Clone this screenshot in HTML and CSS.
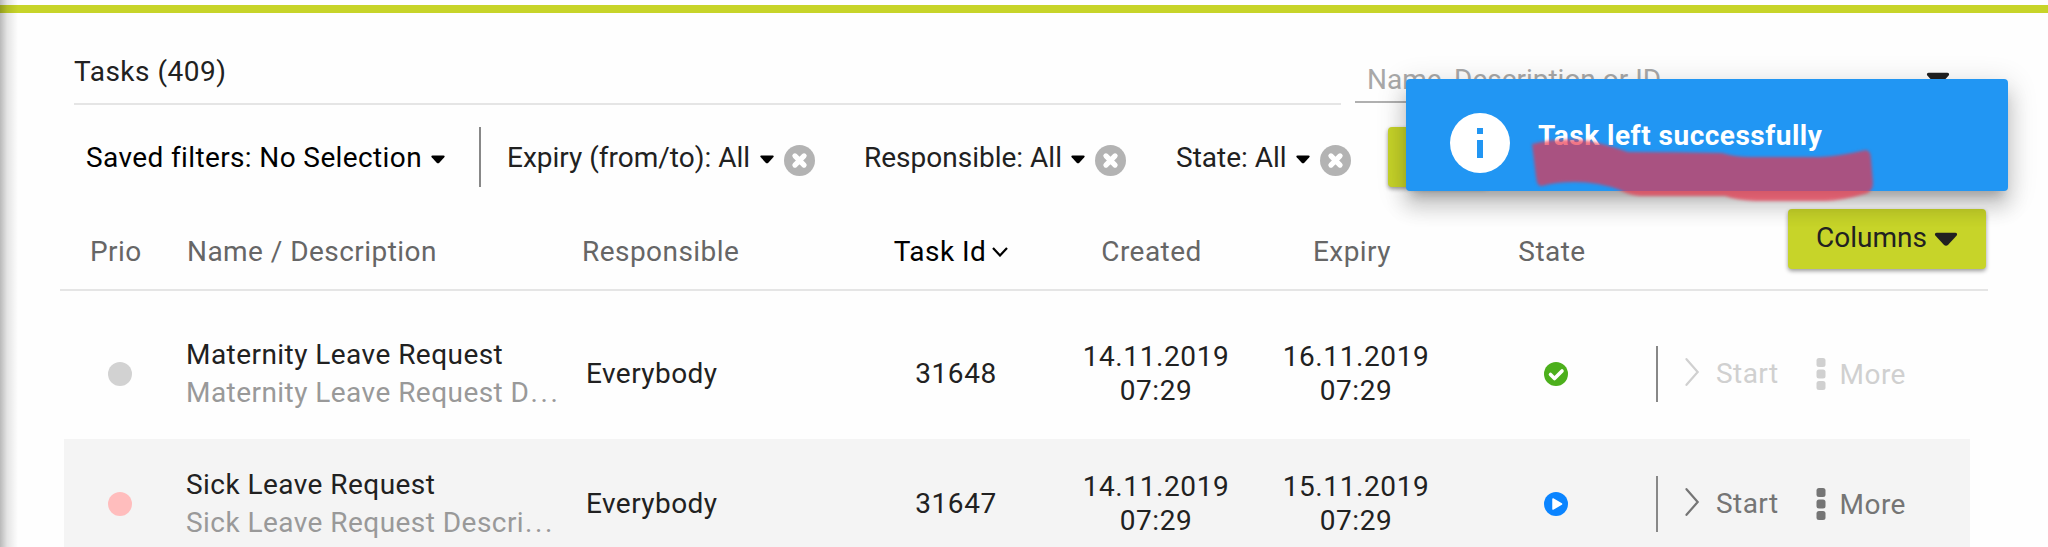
FILE: index.html
```html
<!DOCTYPE html>
<html lang="en">
<head>
<meta charset="utf-8">
<title>Tasks</title>
<link rel="stylesheet" href="styles.css">
</head>
<body>
<svg class="defs" width="0" height="0">
  <defs>
    <symbol id="caret" viewBox="0 0 14 9"><path d="M1.5 0.5h11c1.2 0 1.5 1 .8 1.800L8.300 7.700c-.8.8-1.800.8-2.600 0L.7 2.300C0 1.500.3.500 1.500.500z"/></symbol>
    <symbol id="clear" viewBox="0 0 32 32"><circle cx="16" cy="16" r="16" fill="#b3b3b3"/><path d="M11.300 11.300l9.400 9.400M20.700 11.300l-9.400 9.400" stroke="#fff" stroke-width="5.400" stroke-linecap="round"/></symbol>
    <symbol id="chevron" viewBox="0 0 16 28"><path d="M2.500 1.200L13.700 14 2.500 26.800" fill="none" stroke="currentColor" stroke-width="2.200" stroke-linecap="round"/></symbol>
    <symbol id="dots" viewBox="0 0 10 32"><rect x=".5" y="0" width="9" height="9" rx="2.500"/><rect x=".5" y="11.500" width="9" height="9" rx="2.500"/><rect x=".5" y="23" width="9" height="9" rx="2.500"/></symbol>
  </defs>
</svg>
<div class="page">
  <div class="accent"></div>
  <header class="top">
    <h1 class="title">Tasks (409)</h1>
    <div class="search"><span>Name, Description or ID</span><svg class="search-caret"><use href="#caret"/></svg></div>
  </header>
  <div class="filters">
    <div class="saved">Saved filters: No Selection<svg class="caret"><use href="#caret"/></svg></div>
    <div class="filter expiry">Expiry (from/to): All<svg class="caret"><use href="#caret"/></svg><svg class="clear"><use href="#clear"/></svg></div>
    <div class="filter resp">Responsible: All<svg class="caret"><use href="#caret"/></svg><svg class="clear"><use href="#clear"/></svg></div>
    <div class="filter state">State: All<svg class="caret"><use href="#caret"/></svg><svg class="clear"><use href="#clear"/></svg></div>
    <div class="add"></div>
  </div>
  <div class="head grid">
    <span>Prio</span><span>Name / Description</span><span>Responsible</span>
    <span class="c sorted">Task Id<svg class="sort" viewBox="0 0 16 10"><path d="M1 1l7 7.500L15 1" fill="none" stroke="#000" stroke-width="2.200"/></svg></span>
    <span class="c">Created</span><span class="c">Expiry</span><span class="c">State</span>
    <div class="columns">Columns<svg><use href="#caret"/></svg></div>
  </div>
  <div class="row grid">
    <i class="prio"></i>
    <div class="name"><div>Maternity Leave Request</div><div class="desc">Maternity Leave Request D<span class="ellipsis">...</span></div></div>
    <span class="who">Everybody</span><span class="c num">31648</span>
    <span class="c num">14.11.2019<br>07:29</span><span class="c num">16.11.2019<br>07:29</span>
    <svg class="status" viewBox="0 0 24 24"><circle cx="12" cy="12" r="12" fill="#4caf1c"/><path d="M6.500 12.500l4 4 7.500-7.500" fill="none" stroke="#fff" stroke-width="3.600" stroke-linecap="round" stroke-linejoin="round"/></svg>
    <div class="actions off"><svg class="chev"><use href="#chevron"/></svg><span class="start">Start</span><svg class="dots"><use href="#dots"/></svg><span class="more">More</span></div>
  </div>
  <div class="row grid alt">
    <i class="prio high"></i>
    <div class="name"><div>Sick Leave Request</div><div class="desc">Sick Leave Request Descri<span class="ellipsis">...</span></div></div>
    <span class="who">Everybody</span><span class="c num">31647</span>
    <span class="c num">14.11.2019<br>07:29</span><span class="c num">15.11.2019<br>07:29</span>
    <svg class="status" viewBox="0 0 24 24"><circle cx="12" cy="12" r="12" fill="#0a84ff"/><path d="M9 7l8.500 5L9 17z" fill="#fff" stroke="#fff" stroke-width="1.500" stroke-linejoin="round"/></svg>
    <div class="actions"><svg class="chev"><use href="#chevron"/></svg><span class="start">Start</span><svg class="dots"><use href="#dots"/></svg><span class="more">More</span></div>
  </div>
</div>
<div class="edge"></div>
<div class="toast">
  <svg class="info" viewBox="0 0 60 60"><circle cx="30" cy="30" r="30" fill="#fff"/><path d="M27 15h6v6h-6zM27 27h6v18h-6z" fill="#2196f3"/></svg>
  <span>Task left successfully</span>
</div>
<svg class="marker" viewBox="0 0 350 70"><path d="M2 9Q30 2 60 6Q85 12 98 17Q145 17 192 18Q205 22 220 22H290Q310 21 336 15Q341 16 341 24L343 48Q343 57 335 59Q310 66 295 66H225Q205 65 195 61H110Q98 60 90 55Q68 47 45 47Q25 47 12 51Q7 52 6 42Z"/></svg>
</body>
</html>
```
FILE: styles.css
```css
* { box-sizing: border-box; }
body { margin: 0; width: 2048px; height: 547px; overflow: hidden; position: relative; background: #fefefe; font: 28px/34px Roboto, sans-serif; letter-spacing: .45px; color: #212121; }
.defs { position: absolute; }
svg { flex: none; display: block; }
.page { padding-top: 5px; }
.accent { height: 8px; background: #c7d429; }
.top { display: flex; height: 92px; padding-left: 74px; gap: 14px; }
.title { width: 1267px; margin: 0; padding-top: 42px; font-size: 28px; font-weight: 400; line-height: 34px; letter-spacing: .5px; border-bottom: 2px solid #e5e5e5; }
.search { display: flex; justify-content: space-between; width: 632px; height: 90px; padding: 50px 37px 0 12px; border-bottom: 2px solid #b0b0b0; color: #a8a8a8; letter-spacing: 0; }
.search-caret { width: 24px; height: 15px; margin-top: 9px; fill: #212121; }
.filters { display: flex; height: 100px; padding-left: 86px; letter-spacing: 0; }
.filters > div { display: flex; padding-top: 36px; }
.filters .saved { width: 395px; height: 60px; margin-top: 22px; padding-top: 14px; border-right: 2px solid #888; color: #000; letter-spacing: .38px; }
.caret { width: 14px; height: 9px; margin: 14px 0 0 9.5px; fill: #000; }
.clear { width: 31px; height: 31px; margin: 4px 0 0 10px; }
.expiry { margin-left: 26px; width: 357px; }
.resp { width: 312px; }
.state { width: 212px; }
.filters .add { width: 100px; height: 60px; margin-top: 22px; background: #c7d429; border-radius: 4px; box-shadow: 0 2px 4px rgba(0,0,0,.4); }
.grid { display: grid; grid-template-columns: 96px 400px 270px 200px 200px 200px 200px 1fr; }
.head { grid-template-columns: 97px 395px 269px 200px 201px 200px 200px 1fr; height: 86px; margin: 0 60px; padding: 30px 2px 0 30px; border-bottom: 2px solid #e5e5e5; color: #666; }
.c { text-align: center; }
.num { letter-spacing: .6px; }
.sorted { display: flex; justify-content: center; color: #000; }
.sort { width: 16px; height: 10px; margin: 12px 0 0 6px; }
.columns { display: flex; justify-self: end; width: 198px; height: 60px; margin-top: -26px; padding: 12px 0 0 28px; border-radius: 4px; background: #c7d429; box-shadow: 0 2px 4px rgba(0,0,0,.4); color: #212121; letter-spacing: 0; }
.columns svg { width: 24px; height: 15px; margin: 11px 0 0 7px; fill: #212121; }
.row { height: 130px; margin: 0 78px 0 64px; padding: 0 0 0 26px; align-items: center; }
.head + .row { height: 148px; padding-top: 18px; }
.alt { background: #f4f4f4; }
.prio { width: 24px; height: 24px; margin-left: 18px; border-radius: 50%; background: #d2d2d2; }
.high { background: #ffbdbd; }
.name { line-height: 38px; width: 380px; white-space: nowrap; }
.desc { color: #999; }
.ellipsis { letter-spacing: 2.600px; margin-left: 1px; }
.status { width: 24px; height: 24px; justify-self: center; }
.actions { display: flex; align-items: center; height: 56px; border-left: 2px solid #888; color: #757575; fill: #757575; }
.off { color: #d0d0d0; fill: #d0d0d0; border-color: #888; }
.chev { width: 16px; height: 28px; margin: 0 0 4px 26px; }
.start { margin-left: 16px; }
.dots { width: 10px; height: 32px; margin-left: 37px; }
.more { margin: 2px 0 0 14px; }
.edge { position: absolute; inset: 0 auto 0 0; width: 18px; background: linear-gradient(to right, rgba(0,0,0,.27), rgba(0,0,0,.1) 40%, rgba(0,0,0,0)); }
.toast { position: absolute; left: 1406px; top: 79px; width: 602px; height: 112px; display: flex; padding: 34px 0 0 44px; gap: 28px; border-radius: 4px; background: #2196f3; color: #fff; font-weight: 700; letter-spacing: .5px; box-shadow: 0 10px 10px -6px rgba(0,0,0,.2), 0 16px 20px 2px rgba(0,0,0,.14), 0 6px 28px 4px rgba(0,0,0,.12); }
.toast span { margin-top: 6px; }
.info { width: 60px; height: 60px; }
.marker { position: absolute; left: 1530px; top: 135px; width: 350px; height: 70px; fill: rgba(235,50,75,.68); filter: blur(1.500px); }
```
